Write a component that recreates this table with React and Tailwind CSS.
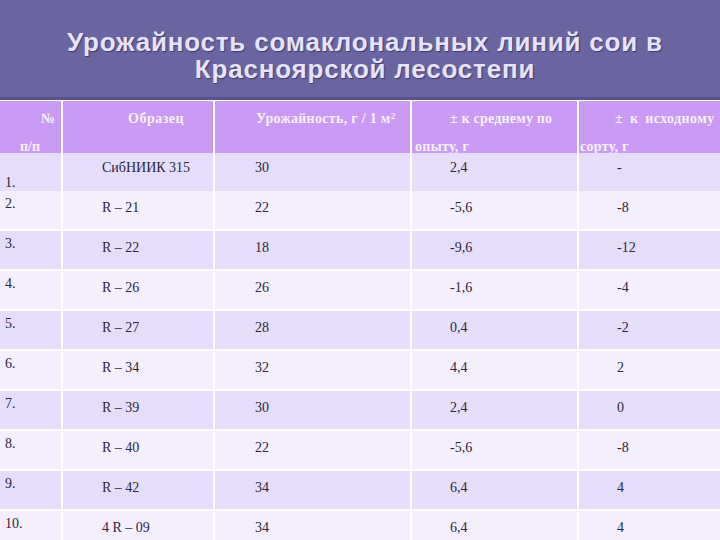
const rows = [
  ["1.", "СибНИИК 315", "30", "2,4", "-"],
  ["2.", "R – 21", "22", "-5,6", "-8"],
  ["3.", "R – 22", "18", "-9,6", "-12"],
  ["4.", "R – 26", "26", "-1,6", "-4"],
  ["5.", "R – 27", "28", "0,4", "-2"],
  ["6.", "R – 34", "32", "4,4", "2"],
  ["7.", "R – 39", "30", "2,4", "0"],
  ["8.", "R – 40", "22", "-5,6", "-8"],
  ["9.", "R – 42", "34", "6,4", "4"],
  ["10.", "4 R – 09", "34", "6,4", "4"],
];

const grid = "grid grid-cols-[61px_150px_195px_165px_1fr] gap-x-[2px]";

export default function App() {
  return (
    <div className="w-[720px] h-[540px] overflow-hidden bg-white">
      <div className="h-[97px] box-content bg-[#6a64a0] border-b-[3px] border-[#57528c] flex flex-col items-center pl-[10px]">
        <h1 className="mt-[29px] text-center text-[26px] leading-[27px] tracking-[0.8px] font-bold text-[#e6e2fa] [text-shadow:1px_1px_1px_#3e3a6e] [font-family:'Liberation_Sans',Arial,sans-serif]">
          Урожайность сомаклональных линий сои в
          <br />
          Красноярской лесостепи
        </h1>
      </div>

      <div className="mt-[1px] flex flex-col gap-y-[2px] bg-white [font-family:'Liberation_Serif','Times_New_Roman',serif]">
        <div className={`${grid} h-[50px] text-[14px] leading-[15px] font-bold text-[#f6f0fe]`}>
          <div className="bg-[#c99bf4] flex flex-col">
            <span className="pt-[10px] pr-[6px] text-right">№</span>
            <span className="pt-[13px] pl-[20px]">п/п</span>
          </div>
          <div className="bg-[#c99bf4] pt-[10px] pl-[65px] tracking-[0.5px]">Образец</div>
          <div className="bg-[#c99bf4] pt-[10px] pl-[41px] tracking-[0.3px]">
            Урожайность, г / 1 м<sup className="text-[9px]">2</sup>
          </div>
          <div className="bg-[#c99bf4] flex flex-col">
            <span className="pt-[10px] pl-[38px] tracking-[0.2px]">± к среднему по</span>
            <span className="pt-[13px] pl-[3px] tracking-[0.3px]">опыту, г</span>
          </div>
          <div className="bg-[#c99bf4] flex flex-col">
            <span className="pt-[10px] pl-[36px] tracking-[0.4px] [word-spacing:3px]">± к исходному</span>
            <span className="pt-[13px] pl-[1px] tracking-[0.3px]">сорту, г</span>
          </div>
        </div>

        {rows.map((r, i) => {
          const bg = i % 2 === 0 ? "bg-[#e6ddfa]" : "bg-[#f4eefd]";
          const first = i === 0;
          const pt = first ? "pt-[5px]" : "pt-[7px]";
          return (
            <div
              key={i}
              className={`${grid} ${first ? "h-[36px]" : "h-[38px]"} text-[14px] leading-[20px] text-[#2b2742]`}
            >
              <div className={`${bg} pl-[5px] ${first ? "pt-[20px]" : "pt-[3px]"}`}>{r[0]}</div>
              <div className={`${bg} pl-[39px] ${pt}`}>{r[1]}</div>
              <div className={`${bg} pl-[40px] ${pt}`}>{r[2]}</div>
              <div className={`${bg} pl-[38px] ${pt}`}>{r[3]}</div>
              <div className={`${bg} pl-[38px] ${pt}`}>{r[4]}</div>
            </div>
          );
        })}
      </div>
    </div>
  );
}
